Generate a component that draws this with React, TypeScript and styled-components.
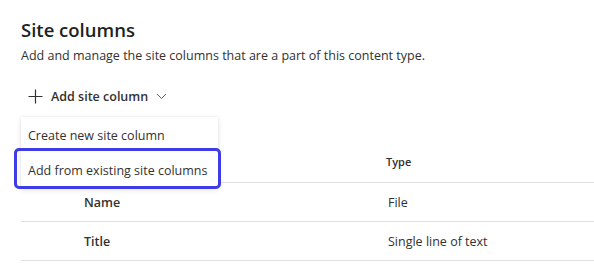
import styled, { createGlobalStyle } from "styled-components";

const GlobalStyle = createGlobalStyle`
  html, body {
    margin: 0;
    padding: 0;
    background: #ffffff;
  }
  body {
    font-family: "Open Sans", "Noto Sans", sans-serif;
    color: #323130;
  }
`;

const Page = styled.div`
  width: 594px;
  height: 275px;
  overflow: hidden;
  padding: 16px 0 0 21px;
  box-sizing: border-box;
`;

const Title = styled.h1`
  margin: 0;
  font-size: 18.5px;
  font-weight: 600;
  line-height: 28px;
  color: #201f1e;
`;

const Subtitle = styled.p`
  margin: 2px 0 0;
  font-size: 12.5px;
  line-height: 20px;
  color: #323130;
`;

const CommandBar = styled.div`
  position: relative;
  margin-top: 22px;
  height: 20px;
`;

const AddButton = styled.button`
  display: flex;
  align-items: center;
  gap: 8px;
  border: 0;
  background: none;
  padding: 0 0 0 7px;
  font-family: inherit;
  font-size: 12.5px;
  font-weight: 600;
  color: #323130;
  cursor: pointer;
`;

const Menu = styled.div`
  position: absolute;
  left: 0;
  top: 29px;
  width: 197px;
  background: #ffffff;
  box-shadow: 0 2px 6px rgba(0, 0, 0, 0.1), 0 0 2px rgba(0, 0, 0, 0.08);
  padding: 1px 0 0;
  z-index: 2;
`;

const MenuItem = styled.div<{ $focused?: boolean }>`
  position: relative;
  height: 35px;
  display: flex;
  align-items: center;
  padding-left: 7px;
  font-size: 12.5px;
  color: #323130;
  white-space: nowrap;

  ${({ $focused }) =>
    $focused &&
    `
    &::after {
      content: "";
      position: absolute;
      left: -7px;
      right: -3px;
      top: -5px;
      bottom: -1px;
      border: 3px solid #3d3ce6;
      border-radius: 5px;
    }
  `}
`;

const Table = styled.div`
  margin-top: 32px;
`;

const Row = styled.div<{ $header?: boolean }>`
  display: grid;
  grid-template-columns: 365px 1fr;
  align-items: center;
  height: ${({ $header }) => ($header ? "42px" : "38px")};
  border-bottom: 1px solid #e1dfdd;
`;

const NameCell = styled.div`
  padding-left: 63px;
  font-size: 12.5px;
  font-weight: 600;
  color: #323130;
`;

const TypeCell = styled.div<{ $header?: boolean }>`
  padding-left: ${({ $header }) => ($header ? "0" : "2px")};
  font-size: ${({ $header }) => ($header ? "11px" : "12.5px")};
  font-weight: ${({ $header }) => ($header ? 600 : 400)};
  color: #323130;
`;

function PlusIcon() {
  return (
    <svg width="15" height="15" viewBox="0 0 15 15">
      <path d="M7.5 0.5v14M0.5 7.5h14" stroke="#323130" strokeWidth="1.2" fill="none" />
    </svg>
  );
}

function ChevronIcon() {
  return (
    <svg width="11" height="7" viewBox="0 0 11 7">
      <path d="M1 1l4.5 4.5L10 1" stroke="#605e5c" strokeWidth="1" fill="none" />
    </svg>
  );
}

const rows = [
  { name: "Name", type: "File" },
  { name: "Title", type: "Single line of text" },
];

export default function App() {
  return (
    <>
      <GlobalStyle />
      <Page>
        <Title>Site columns</Title>
        <Subtitle>
          Add and manage the site columns that are a part of this content type.
        </Subtitle>
        <CommandBar>
          <AddButton>
            <PlusIcon />
            Add site column
            <ChevronIcon />
          </AddButton>
          <Menu>
            <MenuItem>Create new site column</MenuItem>
            <MenuItem $focused>Add from existing site columns</MenuItem>
          </Menu>
        </CommandBar>
        <Table>
          <Row $header>
            <NameCell />
            <TypeCell $header>Type</TypeCell>
          </Row>
          {rows.map((r) => (
            <Row key={r.name}>
              <NameCell>{r.name}</NameCell>
              <TypeCell>{r.type}</TypeCell>
            </Row>
          ))}
        </Table>
      </Page>
    </>
  );
}
